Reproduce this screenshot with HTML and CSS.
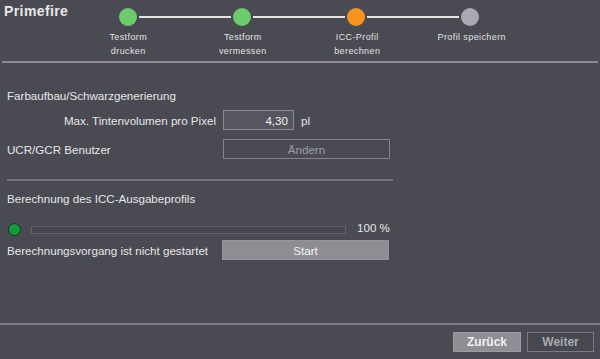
FILE: index.html
```html
<!DOCTYPE html>
<html lang="de">
<head>
    <meta charset="UTF-8">
    <title>Primefire</title>
    <link rel="stylesheet" href="styles.css">
</head>
<body>
    <div class="app">
        <!-- Header with wizard steps -->
        <div class="header">
            <div class="title">Primefire</div>
            <div class="steps">
                <div class="track">
                    <span class="dot done"></span>
                    <span class="link"></span>
                    <span class="dot done"></span>
                    <span class="link"></span>
                    <span class="dot active"></span>
                    <span class="link"></span>
                    <span class="dot todo"></span>
                </div>
                <div class="labels">
                    <div class="label">Testform<br>drucken</div>
                    <div class="label">Testform<br>vermessen</div>
                    <div class="label">ICC-Profil<br>berechnen</div>
                    <div class="label">Profil speichern</div>
                </div>
            </div>
        </div>
        <div class="rule"></div>

        <!-- Main content -->
        <div class="content">
            <div class="section-title">Farbaufbau/Schwarzgenerierung</div>
            <div class="form-row">
                <label class="field-label right">Max. Tintenvolumen pro Pixel</label>
                <div class="field">
                    <div class="input">4,30</div>
                    <span class="unit">pl</span>
                </div>
            </div>
            <div class="form-row gap-lg">
                <label class="field-label">UCR/GCR Benutzer</label>
                <button class="btn ghost">Ändern</button>
            </div>

            <div class="divider"></div>

            <div class="section-title second">Berechnung des ICC-Ausgabeprofils</div>
            <div class="progress-row">
                <span class="status-dot"></span>
                <div class="bar"></div>
                <span class="percent">100 %</span>
            </div>
            <div class="form-row status">
                <label class="field-label">Berechnungsvorgang ist nicht gestartet</label>
                <button class="btn solid">Start</button>
            </div>
        </div>

        <!-- Footer -->
        <div class="footer">
            <button class="nav primary">Zurück</button>
            <button class="nav secondary">Weiter</button>
        </div>
    </div>
</body>
</html>
```

FILE: styles.css
```css
body {
    margin: 0;
    background-color: #4a4a53;
    color: #e6e6e6;
    font-family: "Liberation Sans", Arial, sans-serif;
    font-size: 11.6px;
}
.app {
    width: 600px;
    height: 359px;
    display: flex;
    flex-direction: column;
}
.header {
    height: 61px;
    flex-shrink: 0;
    display: flex;
}
.title {
    width: 71px;
    padding: 3px 0 0 4px;
    box-sizing: border-box;
    font-size: 14px;
    font-weight: bold;
    letter-spacing: 0.4px;
    color: #e8e8e8;
}
.steps {
    padding-top: 8px;
}
.track {
    display: flex;
    align-items: center;
    padding-left: 48px;
}
.dot {
    width: 18px;
    height: 18px;
    border-radius: 50%;
}
.dot.done {
    background-color: #6ccb6a;
}
.dot.active {
    background-color: #f7941e;
}
.dot.todo {
    background-color: #a9a9b2;
}
.link {
    width: 92px;
    height: 2px;
    margin: 0 2px;
    background-color: #e4e4e4;
}
.labels {
    display: flex;
    margin-top: 4px;
}
.label {
    width: 114.5px;
    text-align: center;
    font-size: 9px;
    line-height: 14px;
    letter-spacing: 0.4px;
    color: #e2e2e2;
}
.rule {
    height: 2px;
    flex-shrink: 0;
    margin: 0 2px;
    background-color: #8a8a92;
}
.content {
    flex: 1;
    padding: 25px 7px 0 7px;
}
.section-title {
    line-height: 16px;
}
.section-title.second {
    margin-top: 10px;
}
.form-row {
    display: flex;
    align-items: center;
    gap: 7px;
    margin-top: 6px;
}
.form-row.gap-lg {
    margin-top: 9px;
}
.field-label {
    width: 209px;
    white-space: nowrap;
}
.field-label.right {
    text-align: right;
}
.field {
    display: flex;
    align-items: center;
    gap: 7px;
}
.input {
    width: 71px;
    height: 20px;
    box-sizing: border-box;
    padding: 2px 5px 0 0;
    border: 1px solid #8a8a92;
    background-color: #56565e;
    text-align: right;
    color: #f0f0f0;
    line-height: 15px;
}
.unit {
    color: #e6e6e6;
}
.btn {
    width: 167px;
    height: 20px;
    font-family: inherit;
    font-size: 11.6px;
    padding: 0;
}
.btn.ghost {
    background-color: #4a4a53;
    border: 1px solid #84848c;
    color: #9c9ca4;
}
.btn.solid {
    background-color: #8d8d93;
    border: 1px solid #95959b;
    color: #f4f4f4;
}
.divider {
    width: 386px;
    height: 2px;
    margin-top: 20px;
    background-color: #75757d;
}
.progress-row {
    display: flex;
    align-items: center;
    margin-top: 15px;
    height: 14px;
}
.status-dot {
    width: 11px;
    height: 11px;
    margin-left: 1px;
    border-radius: 50%;
    border: 1px solid #1d2e22;
    background-color: #12993d;
}
.bar {
    width: 313px;
    height: 6px;
    margin-left: 10px;
    margin-top: 2px;
    border: 1px solid #60606a;
    background-color: #46464f;
}
.percent {
    margin-left: 11px;
    margin-top: -4px;
}
.form-row.status {
    margin-top: 4px;
}
.form-row.status .field-label {
    width: 208px;
}
.footer {
    height: 36px;
    flex-shrink: 0;
    box-sizing: border-box;
    border-top: 2px solid #7c7c86;
    display: flex;
    justify-content: flex-end;
    align-items: flex-start;
    gap: 6px;
    padding: 7px 6px 0 0;
}
.nav {
    width: 68px;
    height: 20px;
    font-family: inherit;
    font-size: 12px;
    font-weight: bold;
    padding: 0;
}
.nav.primary {
    background-color: #8e8e94;
    border: 1px solid #9c9ca2;
    color: #f2f2f2;
}
.nav.secondary {
    width: 67px;
    background-color: #47474f;
    border: 1px solid #7a7a82;
    color: #a9a9b1;
}
```
